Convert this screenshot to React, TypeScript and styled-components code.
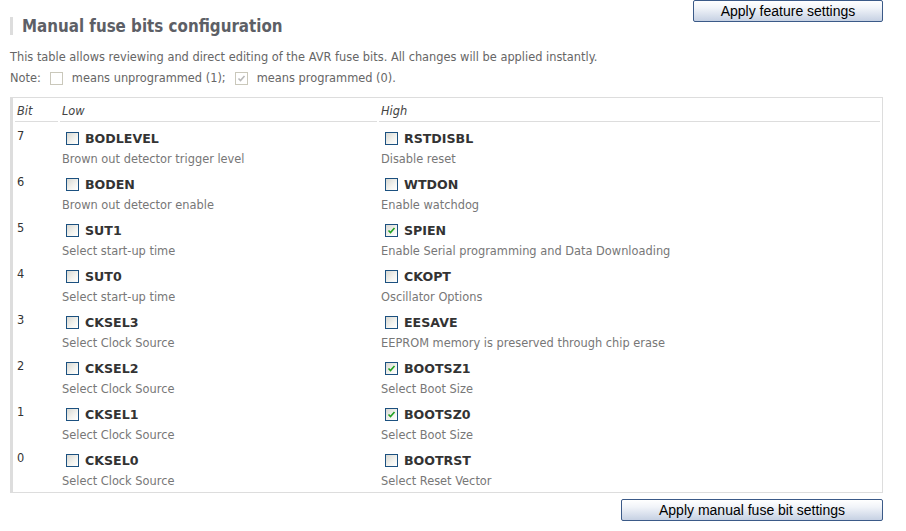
import React from "react";
import styled, { createGlobalStyle } from "styled-components";

const GlobalStyle = createGlobalStyle`
body {
    margin: 0;
    background: #fff;
    font-family: "DejaVu Sans", Verdana, sans-serif;
    font-size: 11.4px;
    color: #666;
}
`

//#region STYLES
const Page = styled.div`
width: 906px;
box-sizing: border-box;
padding: 0 23px 0 10px;
`

const TopBar = styled.div`
display: flex;
justify-content: space-between;
align-items: flex-start;
`

const Heading = styled.h2`
margin: 17px 0 0 0;
border-left: 3px solid #ddd;
padding-left: 9px;
font-family: "DejaVu Sans Condensed", "DejaVu Sans", sans-serif;
font-stretch: condensed;
font-size: 16.8px;
line-height: 18px;
font-weight: bold;
color: #5d5f66;
`

const Button = styled.button`
height: 22px;
box-sizing: border-box;
padding: 0;
border: 1px solid #3b5a88;
border-radius: 2px;
background: linear-gradient(to bottom, #ffffff 0%, #f1f4f9 35%, #c6d1e3 100%);
font-family: "Liberation Sans", Arial, sans-serif;
font-size: 14px;
color: #000;
cursor: pointer;
`

const Intro = styled.p`
margin: 15px 0 0 0;
line-height: 14px;
`

const Note = styled.div`
display: flex;
align-items: center;
gap: 9px;
margin-top: 7px;
line-height: 14px;
`

const Box = styled.div`
margin-top: 12px;
border: 1px solid #ddd;
border-left: 3px solid #ddd;
`

const Table = styled.table`
width: 100%;
border-collapse: separate;
border-spacing: 2px;
`

const Th = styled.th`
text-align: left;
font-style: italic;
font-weight: normal;
color: #444;
padding: 4px 1px 3px 2px;
line-height: 14px;
border-bottom: 1px solid #ddd;
`

const BitCell = styled.td`
vertical-align: top;
padding: 5px 1px 0 2px;
line-height: 14px;
color: #333;
`

const FuseCell = styled.td`
vertical-align: top;
padding: 7px 1px 2px 2px;
`

const FuseName = styled.label`
display: flex;
align-items: center;
height: 15px;
padding-left: 4px;
gap: 6px;
font-weight: bold;
font-size: 12.6px;
color: #333;
`

const FuseDesc = styled.div`
margin-top: 6px;
line-height: 14px;
color: #777;
`

const Check = styled.span.attrs((props: { disabled?: boolean }) => props)`
display: inline-flex;
align-items: center;
justify-content: center;
width: 13px;
height: 13px;
box-sizing: border-box;
border: 1px solid ${props => props.disabled ? '#cac8bb' : '#1c5180'};
background: ${props => props.disabled ? '#fff' : 'linear-gradient(135deg, #d8d8d2 0%, #f4f4f0 60%, #ffffff 100%)'};
flex-shrink: 0;
`

const Footer = styled.div`
display: flex;
justify-content: flex-end;
margin-top: 6px;
`
//#endregion

type Fuse = { name: string; desc: string; on: boolean }

const rows: { bit: number; low: Fuse; high: Fuse }[] = [
    { bit: 7, low: { name: 'BODLEVEL', desc: 'Brown out detector trigger level', on: false }, high: { name: 'RSTDISBL', desc: 'Disable reset', on: false } },
    { bit: 6, low: { name: 'BODEN', desc: 'Brown out detector enable', on: false }, high: { name: 'WTDON', desc: 'Enable watchdog', on: false } },
    { bit: 5, low: { name: 'SUT1', desc: 'Select start-up time', on: false }, high: { name: 'SPIEN', desc: 'Enable Serial programming and Data Downloading', on: true } },
    { bit: 4, low: { name: 'SUT0', desc: 'Select start-up time', on: false }, high: { name: 'CKOPT', desc: 'Oscillator Options', on: false } },
    { bit: 3, low: { name: 'CKSEL3', desc: 'Select Clock Source', on: false }, high: { name: 'EESAVE', desc: 'EEPROM memory is preserved through chip erase', on: false } },
    { bit: 2, low: { name: 'CKSEL2', desc: 'Select Clock Source', on: false }, high: { name: 'BOOTSZ1', desc: 'Select Boot Size', on: true } },
    { bit: 1, low: { name: 'CKSEL1', desc: 'Select Clock Source', on: false }, high: { name: 'BOOTSZ0', desc: 'Select Boot Size', on: true } },
    { bit: 0, low: { name: 'CKSEL0', desc: 'Select Clock Source', on: false }, high: { name: 'BOOTRST', desc: 'Select Reset Vector', on: false } },
]

const CheckBox = ({ on, disabled }: { on: boolean; disabled?: boolean }) => (
    <Check disabled={disabled}>
        {on &&
            <svg width="9" height="9" viewBox="0 0 9 9">
                <path d="M1.5 4.5 L3.5 6.5 L7.5 2" fill="none"
                      stroke={disabled ? '#b9b9b9' : '#21a121'} strokeWidth="1.6"/>
            </svg>}
    </Check>
)

const FuseBit = ({ fuse }: { fuse: Fuse }) => (
    <FuseCell>
        <FuseName>
            <CheckBox on={fuse.on}/>
            {fuse.name}
        </FuseName>
        <FuseDesc>{fuse.desc}</FuseDesc>
    </FuseCell>
)

const App = () => {
    return (
        <Page>
            <GlobalStyle/>
            <TopBar>
                <Heading>Manual fuse bits configuration</Heading>
                <Button style={{ width: 190 }}>Apply feature settings</Button>
            </TopBar>

            <Intro>This table allows reviewing and direct editing of the AVR fuse bits. All changes will be applied instantly.</Intro>
            <Note>
                Note: <CheckBox on={false} disabled/> means unprogrammed (1); <CheckBox on disabled/> means programmed (0).
            </Note>

            <Box>
                <Table>
                    <thead>
                        <tr>
                            <Th style={{ width: 40 }}>Bit</Th>
                            <Th style={{ width: 314 }}>Low</Th>
                            <Th>High</Th>
                        </tr>
                    </thead>
                    <tbody>
                        {rows.map(r =>
                            <tr key={r.bit}>
                                <BitCell>{r.bit}</BitCell>
                                <FuseBit fuse={r.low}/>
                                <FuseBit fuse={r.high}/>
                            </tr>
                        )}
                    </tbody>
                </Table>
            </Box>

            <Footer>
                <Button style={{ width: 262 }}>Apply manual fuse bit settings</Button>
            </Footer>
        </Page>
    )
}

export default App
